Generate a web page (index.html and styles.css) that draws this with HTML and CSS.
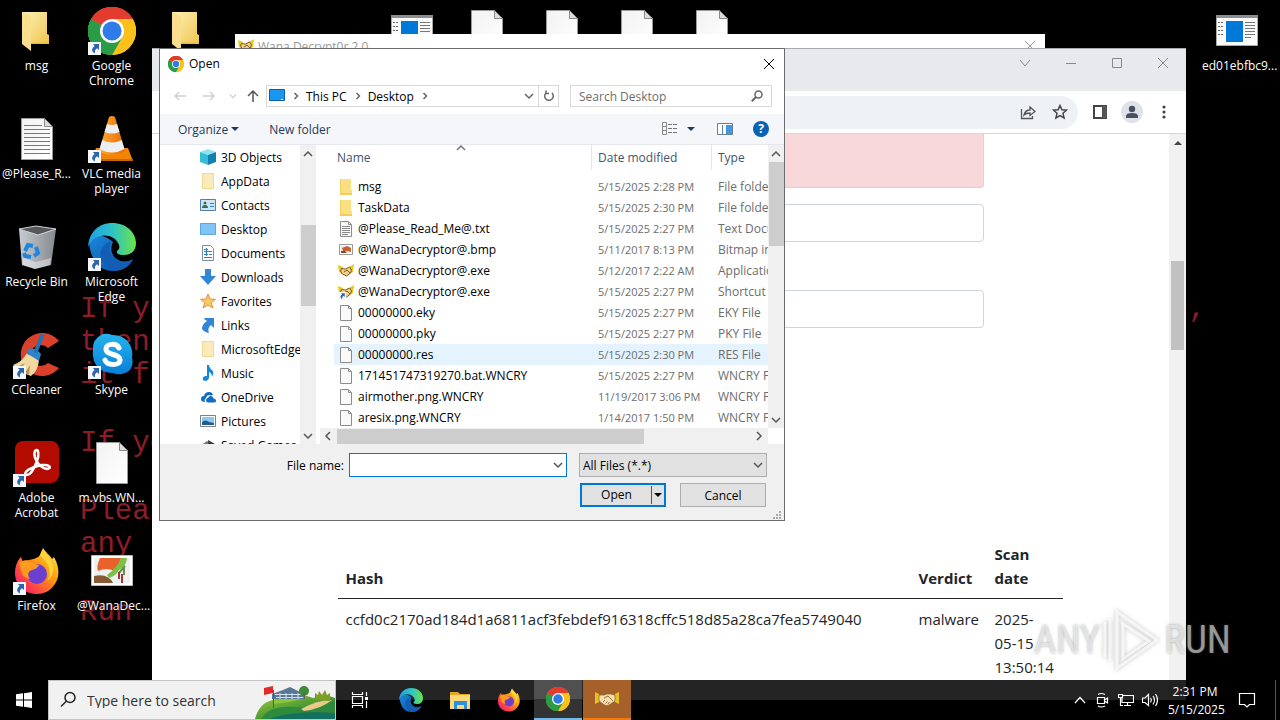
FILE: index.html
```html
<!DOCTYPE html>
<html lang="en">
<head>
  <meta charset="UTF-8">
  <meta name="viewport" content="width=device-width, initial-scale=1.0">
  <title>Desktop</title>
  <link rel="stylesheet" href="styles.css">
</head>
<body>
  <!-- shared icons -->
  <svg class="sprite" aria-hidden="true">
    <defs>
      <linearGradient id="g-folder" x1="0" y1="0" x2="1" y2="1"><stop offset="0" stop-color="#fff0b8"/><stop offset="1" stop-color="#efc64e"/></linearGradient>
      <linearGradient id="g-paper" x1="0" y1="0" x2="1" y2="1"><stop offset="0" stop-color="#f2f2f2"/><stop offset="1" stop-color="#fff"/></linearGradient>
      <linearGradient id="g-edge1" x1="0" y1="0" x2="1" y2="0"><stop offset="0" stop-color="#1f9fe0"/><stop offset=".5" stop-color="#2cc3c8"/><stop offset="1" stop-color="#6be34a"/></linearGradient>
      <linearGradient id="g-edge2" x1="0" y1="0" x2="1" y2="1"><stop offset="0" stop-color="#1b86dc"/><stop offset="1" stop-color="#0b4fa2"/></linearGradient>
      <linearGradient id="g-fox" x1="1" y1="0" x2="0" y2="1"><stop offset="0" stop-color="#fff14a"/><stop offset=".4" stop-color="#ff980e"/><stop offset=".75" stop-color="#ff3b4f"/><stop offset="1" stop-color="#e31587"/></linearGradient>
      <linearGradient id="g-skype" x1="0" y1="0" x2="0" y2="1"><stop offset="0" stop-color="#22b4ef"/><stop offset="1" stop-color="#0a7fd6"/></linearGradient>
      <linearGradient id="g-cone" x1="0" y1="0" x2="1" y2="0"><stop offset="0" stop-color="#ffae3a"/><stop offset="1" stop-color="#e86a00"/></linearGradient>
      <linearGradient id="g-bin" x1="0" y1="0" x2="1" y2="0"><stop offset="0" stop-color="#c8cbd0"/><stop offset="1" stop-color="#85898f"/></linearGradient>
      <linearGradient id="g-hill" x1="0" y1="0" x2="1" y2="1"><stop offset="0" stop-color="#a6cc3c"/><stop offset=".5" stop-color="#4f9e34"/><stop offset="1" stop-color="#0f5a4e"/></linearGradient>
    </defs>
    <symbol id="i-shortcut" viewBox="0 0 13 13"><path fill="#f5f7fa" d="M0 0h13v13H0z"/><path fill="#2b64ad" d="M5 2h6v6L9 6.200C7 7.500 6.600 9 7 11.500 3.500 10 3.200 6.500 6.700 4z"/></symbol>
    <symbol id="i-folder" viewBox="0 0 48 48"><path fill="url(#g-folder)" d="M9 5h25v22l2 1v9H16z"/><path fill="#f9df8d" d="M9 5l9 4v35l-9-7z"/><path fill="#e9bd45" d="M18 37h18v-1.500H18z"/></symbol>
    <symbol id="i-paper" viewBox="0 0 48 48"><path fill="url(#g-paper)" stroke="#9a9a9a" d="M8.500 3.500h23l8 8v33h-31z"/><path fill="#dcdcdc" stroke="#8a8a8a" d="M31.500 3.500v8h8z"/></symbol>
    <symbol id="i-text" viewBox="0 0 48 48"><use href="#i-paper"/><path stroke="#777" d="M11 10.500h18M11 14.500h26M11 18.500h26M11 22.500h26M11 26.500h26M11 30.500h26M11 34.500h26M11 38.500h26"/></symbol>
    <symbol id="i-chrome" viewBox="0 0 48 48"><circle cx="24" cy="24" r="24" fill="#fbc11a"/><path fill="#e33b2e" d="M24 24L3.200 12A24 24 0 0 1 44.800 12z"/><path fill="#2a9c48" d="M24 24L3.200 12A24 24 0 0 0 24 48l10.400-18z"/><path fill="#fbc11a" d="M24 12h20.800A24 24 0 0 1 24 48l10.400-18z"/><path fill="#e33b2e" d="M3.200 12A24 24 0 0 1 44.800 12H24a12 12 0 0 0-10.400 6z"/><path fill="#2a9c48" d="M3.200 12l10.400 18A12 12 0 0 0 34.400 30L24 48A24 24 0 0 1 3.200 12z"/><circle cx="24" cy="24" r="12" fill="#fff"/><circle cx="24" cy="24" r="9.500" fill="#2f7bea"/></symbol>
    <symbol id="i-vlc" viewBox="0 0 48 48"><path fill="#f38500" d="M8 33h32l5 13H3z"/><path fill="#c96500" d="M3 44h42v2H3z"/><path fill="url(#g-cone)" d="M21 2q3-2 6 0l10 34q-13 8-26 0z"/><path fill="#eceff2" d="M19 9q5 2 10 0l2.500 8q-7.500 3-15 0zM14.300 25q9.700 5 19.400 0l2.800 9q-12.500 7-25 0z"/></symbol>
    <symbol id="i-bin" viewBox="0 0 48 48"><path fill="url(#g-bin)" d="M6 6l18 5 19-5-5 36-16 4-13-4z"/><path fill="#55585c" stroke="#cfd2d6" d="M6 6l17-3 20 3-18 6z"/><path fill="#fff" opacity=".4" d="M10 35l13 4 15-4-1 7-15 4-12-4z"/><g fill="none" stroke="#1c86e0" stroke-width="4"><path d="M12 28l3-6 5 1M23 24l2 6-4 3M18 34l-6-1-1-3"/></g></symbol>
    <symbol id="i-edge" viewBox="0 0 48 48"><path fill="url(#g-edge2)" d="M1 20C3 36 10 48 25 48c9 0 16-4 20-12-6 4-12 3-16 0-6-4-7-10-4-17C14 9 3 12 1 20z"/><path fill="url(#g-edge1)" d="M0 24C1 8 12 0 24 0c15 0 24 10 24 20 0 8-5 12-12 12-6 0-8-2-7-4 3-2 3-5 1-8C25 10 6 9 0 24z"/><path fill="#125eb4" d="M19 20C7 28 13 46 27 48 36 47 42 43 45 36c-7 4-14 3-19-1-5-4-6-10-3-16z"/></symbol>
    <symbol id="i-ccleaner" viewBox="0 0 48 48"><path fill="#d9412c" d="M46 10A21.500 21.500 0 1 0 46 37L35 32A10.500 10.500 0 1 1 35 17z"/><path fill="#f2d9a0" d="M14 22l12 7q-1 11-8 16Q8 42 0 34q9-3 14-12z"/><path fill="#b99556" d="M4 36l8-4-5 7zM12 42l5-8-1 10z"/><path fill="#2d84c8" d="M15 18q7-2 13 5l-2 7q-7-5-12-7z"/><path stroke="#2472b2" stroke-width="4" stroke-linecap="round" d="M23 20l6-15"/></symbol>
    <symbol id="i-skype" viewBox="0 0 48 48"><path fill="url(#g-skype)" d="M15 3q5-1 9 1Q38 4 43 16q2 6 1 10 3 14-10 17-5 1-9-1Q11 42 6 30q-2-6-1-11Q4 8 15 3z"/><path fill="none" stroke="#fff" stroke-width="5" stroke-linecap="round" d="M31 17c-2-5-13-5-13 1 0 7 14 4 14 11 0 6-13 6-15 0"/></symbol>
    <symbol id="i-acrobat" viewBox="0 0 48 48"><rect x="2" y="2" width="44" height="42" rx="8" fill="#b30b00"/><path fill="none" stroke="#fff" stroke-width="2.600" d="M22 12c4-4 4 5 2 10-3 8-7 14-10 14-4 0-1-5 5-7 6-3 14-4 17-2 3 3-3 4-7 1-5-3-9-11-7-16z"/></symbol>
    <symbol id="i-firefox" viewBox="0 0 48 48"><path fill="url(#g-fox)" d="M30 1c3 5 7 7 9 11l2-2c4 7 6 16 3 23-4 9-11 14-20 14C11 47 2 38 2 26 2 20 4 14 8 10l2 5q3-2 6-2c5-1 9-2 11-5q1-3 3-7z"/><circle cx="24" cy="27" r="10" fill="#6b3fd0"/><path fill="#ff9a1c" d="M6 16q6-5 11-1 4 2 9 3-2 4-7 5c-4 1-5 5-2 9q-8-1-9-9z"/><path fill="#ffd43a" d="M27 8q4 4 8 10 4 9-1 16 7-5 6-15-3-9-10-17z"/></symbol>
    <symbol id="i-bmp" viewBox="0 0 48 48"><path fill="#fff" stroke="#bbb" d="M3.500 8.500h41v30h-41z"/><path fill="#eef1f3" d="M6 11h36v25H6z"/><path fill="#e8622a" d="M12 11h21q-2 8-7 13-7-4-16 0-2-4 2-13z"/><path fill="#7cc04a" d="M33 11h6q-1 9-8 12-3 6-10 8l-2-3q10-7 14-17z"/><path fill="#8a5a36" d="M6 29q14-3 19 7H6z"/><path stroke="#6a8b57" stroke-width="2" d="M31 26l6-7M36 20v8"/><path stroke="#a33" stroke-width="2" d="M34 27v9M31 25v7"/></symbol>
    <symbol id="i-sbmp" viewBox="0 0 16 16"><path fill="#fff" stroke="#999" d="M1.500 2.500h13v10h-13z"/><path fill="#e4e8ea" d="M3 4h10v7H3z"/><path fill="#c8622e" d="M4 6l5-2 4 2v4l-3-1H5z"/><path fill="#7a4a2a" d="M3 9h4l2 2H3z"/></symbol>
    <symbol id="i-exe" viewBox="0 0 48 48"><path fill="#fafafa" stroke="#aaa" d="M3.500 8.500h41v30h-41z"/><path fill="#8a8d92" d="M3 8h42v3H3z"/><path fill="#0078d7" d="M13 14h17v21H13z"/><path stroke="#666" stroke-dasharray="2 1" d="M5 15.500h6M5 19.500h6M5 23.500h6M5 27.500h6"/><path stroke="#777" d="M32 15.500h10M32 18.500h10M32 21.500h10M32 24.500h10M32 27.500h10M32 30.500h6"/></symbol>
    <symbol id="i-hands" viewBox="0 0 24 18"><path fill="#e8c020" d="M0 2l4 2v8l-4 2zM24 2l-4 2v8l4 2z"/><path fill="#f4dfb4" stroke="#8e6428" stroke-width=".8" d="M4 5l5 0 3-1 4 0 4 1v6l-6 4q-3 2-6-1l-4-3z"/><path stroke="#8e6428" stroke-width=".9" fill="none" d="M9 8l4-2 5 5M8 12l2-2M10.500 13.500l2-2M13 14l1.500-2"/></symbol>
    <symbol id="i-shands" viewBox="0 0 16 16"><path fill="#e8c81c" d="M0 2l5 2v7L1 9zM16 1l-5 3v7l4-2z"/><path fill="#eed08a" stroke="#7d5a1e" d="M3.500 5.500l4 .5 4-2 2 3-1 3-4 3-4-2-2-3z"/><path fill="none" stroke="#7d5a1e" d="M6 9l3-2 3 3"/></symbol>
    <symbol id="i-file" viewBox="0 0 16 16"><path fill="#fafafa" stroke="#8c8c8c" d="M2.500.5h8l3 3v12h-11z"/><path fill="none" stroke="#8c8c8c" d="M10.500.5v3h3"/></symbol>
    <symbol id="i-txt" viewBox="0 0 16 16"><use href="#i-file"/><path stroke="#888" d="M4 5.500h8M4 7.500h8M4 9.500h8M4 11.500h8M4 13.500h6"/></symbol>
    <symbol id="i-sfolder" viewBox="0 0 16 16"><path fill="#fbdf83" d="M2 0h11v11h1v5H2z"/><path fill="#f3cd5c" d="M3 14h11v2H2V0h1z"/></symbol>
    <symbol id="i-pfolder" viewBox="0 0 16 16"><path fill="#fbeaba" stroke="#f0d890" d="M2.500.5h11v15h-11z"/></symbol>
    <symbol id="i-chev-r" viewBox="0 0 8 8"><path fill="none" stroke="#666" stroke-width="1.500" d="M2.500 1L5.500 4 2.500 7"/></symbol>
    <symbol id="i-chev-d" viewBox="0 0 10 10"><path fill="none" stroke="currentColor" stroke-width="1.500" d="M1 3l4 4 4-4"/></symbol>
    <symbol id="i-chev-u" viewBox="0 0 10 10"><path fill="none" stroke="currentColor" stroke-width="1.500" d="M1 7l4-4 4 4"/></symbol>
    <symbol id="i-chev-l" viewBox="0 0 10 10"><path fill="none" stroke="currentColor" stroke-width="1.500" d="M7 1L3 5l4 4"/></symbol>
    <symbol id="i-chev-rr" viewBox="0 0 10 10"><path fill="none" stroke="currentColor" stroke-width="1.500" d="M3 1l4 4-4 4"/></symbol>
    <symbol id="i-tri" viewBox="0 0 8 4"><path fill="currentColor" d="M0 0h8L4 4z"/></symbol>
    <symbol id="i-x" viewBox="0 0 12 12"><path stroke="currentColor" d="M1 1l10 10M11 1L1 11"/></symbol>
  </svg>

  <main class="desktop">
    <div class="wallpaper">
      <p>If yo<span class="wallpaper-end">,</span></p>
      <p>then</p>
      <p>it fr</p>
      <p class="gap">If yo</p>
      <p class="gap">Pleas</p>
      <p>any</p>
      <p class="gap">Run</p>
    </div>

    <div class="icons">
      <div class="shortcut"><svg class="big"><use href="#i-folder"/></svg>msg</div>
      <div class="shortcut"><svg class="big"><use href="#i-text"/></svg>@Please_R...</div>
      <div class="shortcut"><svg class="big"><use href="#i-bin"/></svg>Recycle Bin</div>
      <div class="shortcut"><svg class="big"><use href="#i-ccleaner"/></svg><svg class="arrow"><use href="#i-shortcut"/></svg>CCleaner</div>
      <div class="shortcut"><svg class="big"><use href="#i-acrobat"/></svg><svg class="arrow"><use href="#i-shortcut"/></svg>Adobe Acrobat</div>
      <div class="shortcut"><svg class="big"><use href="#i-firefox"/></svg><svg class="arrow"><use href="#i-shortcut"/></svg>Firefox</div>
      <div class="shortcut"><svg class="big"><use href="#i-chrome"/></svg><svg class="arrow"><use href="#i-shortcut"/></svg>Google Chrome</div>
      <div class="shortcut"><svg class="big"><use href="#i-vlc"/></svg><svg class="arrow"><use href="#i-shortcut"/></svg>VLC media player</div>
      <div class="shortcut"><svg class="big"><use href="#i-edge"/></svg><svg class="arrow"><use href="#i-shortcut"/></svg>Microsoft Edge</div>
      <div class="shortcut"><svg class="big"><use href="#i-skype"/></svg><svg class="arrow"><use href="#i-shortcut"/></svg>Skype</div>
      <div class="shortcut"><svg class="big"><use href="#i-paper"/></svg>m.vbs.WN...</div>
      <div class="shortcut"><svg class="big"><use href="#i-bmp"/></svg>@WanaDec...</div>
      <div class="shortcut col-3"><svg class="big"><use href="#i-folder"/></svg></div>
      <div class="shortcut col-6"><svg class="big"><use href="#i-exe"/></svg></div>
      <div class="shortcut col-7"><svg class="big"><use href="#i-paper"/></svg></div>
      <div class="shortcut col-8"><svg class="big"><use href="#i-paper"/></svg></div>
      <div class="shortcut col-9"><svg class="big"><use href="#i-paper"/></svg></div>
      <div class="shortcut col-10"><svg class="big"><use href="#i-paper"/></svg></div>
      <div class="shortcut col-17"><svg class="big"><use href="#i-exe"/></svg>ed01ebfbc9...</div>
    </div>

    <section class="window wana">
      <svg class="s16"><use href="#i-shands"/></svg>
      <span class="wana-title">Wana Decrypt0r 2.0</span>
      <button class="plain" aria-label="Close Wana"><svg class="s12"><use href="#i-x"/></svg></button>
    </section>

    <section class="window browser">
      <div class="tabstrip">
        <button class="plain" aria-label="Search tabs"><svg class="s12" viewBox="0 0 12 12"><path d="M1 3l5 6 5-6"/></svg></button>
        <button class="plain" aria-label="Minimize"><svg class="s12" viewBox="0 0 12 12"><path d="M1 6.500h10"/></svg></button>
        <button class="plain" aria-label="Maximize"><svg class="s12" viewBox="0 0 12 12"><path d="M1.500 1.500h9v9h-9z"/></svg></button>
        <button class="plain" aria-label="Close browser"><svg class="s12" viewBox="0 0 12 12"><path d="M1 1l10 10M11 1L1 11"/></svg></button>
      </div>
      <div class="toolbar">
        <div class="omnibox">
          <button class="plain" aria-label="Share"><svg class="s16" viewBox="0 0 16 16" fill="none" stroke="#555" stroke-width="1.300"><path d="M1.500 5v9.500h11V12M4 11c1-4 3-5 6-5V3l5 4.500-5 4V9c-3 0-4.500.5-6 2z"/></svg></button>
          <button class="plain" aria-label="Bookmark"><svg class="s16" viewBox="0 0 16 16" fill="none" stroke="#444" stroke-width="1.500"><path d="M8 1.500l1.900 4.300 4.600.4-3.500 3.100 1.100 4.600L8 11.500l-4.100 2.400L5 9.300 1.500 6.200l4.600-.4z"/></svg></button>
        </div>
        <button class="plain panel" aria-label="Side panel"><svg class="s16" viewBox="0 0 16 16"><path fill="none" stroke="#444" stroke-width="2" d="M2 2h12v12H2z"/><path fill="#555" d="M10 2h5v12h-5z"/></svg></button>
        <button class="plain avatar" aria-label="Profile"><svg class="s16" viewBox="0 0 16 16" fill="#4a5064"><circle cx="8" cy="5" r="3.200"/><path d="M2 14v-2q0-3 6-3t6 3v2z"/></svg></button>
        <button class="plain" aria-label="Menu"><svg class="s16" viewBox="0 0 16 16" fill="#444"><circle cx="8" cy="3" r="1.600"/><circle cx="8" cy="8" r="1.600"/><circle cx="8" cy="13" r="1.600"/></svg></button>
      </div>
      <div class="viewport">
        <div class="page">
          <div class="container">
            <div class="alert"></div>
            <input class="field" type="text" aria-label="Hash">
            <input class="field second" type="text" aria-label="File">
            <table class="scans">
              <thead>
                <tr><th class="hash">Hash</th><th class="verdict">Verdict</th><th>Scan date</th></tr>
              </thead>
              <tbody>
                <tr><td>ccfd0c2170ad184d1a6811acf3febdef916318cffc518d85a28ca7fea5749040</td><td>malware</td><td>2025-<wbr>05-15 13:50:14</td></tr>
              </tbody>
            </table>
          </div>
        </div>
        <div class="page-scroll">
          <svg class="tri-up"><use href="#i-tri"/></svg>
          <div class="page-thumb"></div>
        </div>
      </div>
    </section>

    <section class="window dialog">
      <header class="dialog-title">
        <svg class="s16"><use href="#i-chrome"/></svg>
        <span>Open</span>
        <button class="plain" aria-label="Close"><svg class="s12"><use href="#i-x"/></svg></button>
      </header>
      <nav class="dialog-nav">
        <button class="plain step" aria-label="Back"><svg class="s16" viewBox="0 0 16 16"><path d="M14 8H3M7 4L3 8l4 4"/></svg></button>
        <button class="plain step" aria-label="Forward"><svg class="s16" viewBox="0 0 16 16"><path d="M2 8h11M9 4l4 4-4 4"/></svg></button>
        <button class="plain recent" aria-label="Recent"><svg class="s8"><use href="#i-chev-d"/></svg></button>
        <button class="plain up" aria-label="Up"><svg class="s16" viewBox="0 0 16 16"><path d="M8 14V3M3 8l5-5 5 5"/></svg></button>
        <div class="address">
          <svg class="monitor" viewBox="0 0 16 14"><path fill="#1a96f0" stroke="#0b5fae" d="M.5.5h15v11H.5z"/><path stroke="#fff" d="M2 13h2M12 10.500h2"/></svg>
          <svg class="s8"><use href="#i-chev-r"/></svg>
          <a href="#pc">This PC</a>
          <svg class="s8"><use href="#i-chev-r"/></svg>
          <a href="#desktop">Desktop</a>
          <svg class="s8"><use href="#i-chev-r"/></svg>
          <button class="plain drop" aria-label="Locations"><svg class="s10"><use href="#i-chev-d"/></svg></button>
          <button class="plain refresh" aria-label="Refresh"><svg class="s12" viewBox="0 0 12 12"><path fill="none" stroke="#666" stroke-width="1.500" d="M3.500 2.500A4.300 4.300 0 1 0 9 3M3 .5v3h3"/></svg></button>
        </div>
        <div class="search">
          <input type="text" placeholder="Search Desktop" aria-label="Search Desktop">
          <svg class="s12" viewBox="0 0 12 12"><circle cx="7.500" cy="4.500" r="3.500" fill="none" stroke="#666" stroke-width="1.500"/><path stroke="#666" stroke-width="2" d="M5 7L.8 11.200"/></svg>
        </div>
      </nav>
      <div class="commands">
        <button class="plain organize">Organize <svg class="tri"><use href="#i-tri"/></svg></button>
        <button class="plain">New folder</button>
        <button class="plain views" aria-label="Views"><svg class="s16" viewBox="0 0 16 14"><path fill="none" stroke="#8a8a8a" d="M.5.5h4v12h-4zM.5 4.500h4M.5 8.500h4"/><path stroke="#777" stroke-dasharray="4 1" d="M6 2.500h10M6 6.500h10M6 10.500h10"/></svg><svg class="tri"><use href="#i-tri"/></svg></button>
        <button class="plain preview" aria-label="Preview pane"><svg class="s16" viewBox="0 0 16 14"><path fill="#fff" stroke="#6b7f96" d="M.5 1.500h15v11H.5z"/><path fill="#3f98e4" d="M9 3h6v9H9z"/><path stroke="#6b7f96" d="M5.500 3v9"/></svg></button>
        <button class="help" aria-label="Help">?</button>
      </div>
      <div class="dialog-body">
        <ul class="tree">
          <li><svg class="s16" viewBox="0 0 16 16"><path fill="#8fe3f2" d="M0 3l8-3 8 3-8 3z"/><path fill="#35bdd8" d="M0 3l8 3v10l-8-3z"/><path fill="#147fae" d="M16 3L8 6v10l8-3z"/></svg>3D Objects</li>
          <li><svg class="s16"><use href="#i-pfolder"/></svg>AppData</li>
          <li><svg class="s16" viewBox="0 0 16 16"><path fill="#cfe6f7" stroke="#517fa5" d="M.5 2.500h15v11H.5z"/><circle cx="5" cy="6" r="1.500" fill="#3e6e52"/><path fill="#3e6e52" d="M2 11q0-3 3-3t3 3z"/><path stroke="#2a84c8" d="M10 6.500h4M10 9.500h4"/></svg>Contacts</li>
          <li><svg class="s16" viewBox="0 0 16 16"><path fill="#80c4f6" stroke="#5ba6dd" d="M.5 2.500h15v11H.5z"/></svg>Desktop</li>
          <li><svg class="s16" viewBox="0 0 16 16"><path fill="#fff" stroke="#7b8ea0" d="M2.500.5h8l3 3v12h-11z"/><path stroke="#2a84c8" d="M4 4.500h4M4 6.500h8M4 9.500h4M9 9.500h3M4 12.500h8M6.500 3v8"/></svg>Documents</li>
          <li><svg class="s16" viewBox="0 0 16 16"><path fill="#2f87d6" d="M5 0h6v7h5l-8 9-8-9h5z"/></svg>Downloads</li>
          <li><svg class="s16" viewBox="0 0 16 16"><path fill="#fbcb62" stroke="#dd9440" d="M8 1l2 5 5.500.3-4.300 3.500L13 15 8 12l-5 3 1.800-5.200L.5 6.300 6 6z"/></svg>Favorites</li>
          <li><svg class="s16" viewBox="0 0 16 16"><path fill="#2f87d6" d="M5 1h9v10l-3-3q-4 3-2 8-5-1-7-4 0-5 5-8L4 2z"/></svg>Links</li>
          <li><svg class="s16"><use href="#i-pfolder"/></svg>MicrosoftEdge</li>
          <li><svg class="s16" viewBox="0 0 16 16"><path fill="#1488e0" d="M7 0h2q0 3 4 6 1 3-1 6 0-4-3-5v6q-1 3-4 3-3-1-2-3.500Q4 10.500 7 11z"/></svg>Music</li>
          <li><svg class="s16" viewBox="0 0 16 16"><path fill="#0f6cc4" d="M1 10q0-3 3-3 1-4 5-4 3 0 4 3l-2 .5Q7 5 6 9q-2 1-1 4Q1 13 1 10z"/><path fill="#0f6cc4" d="M6 11q0-2 2-2 1-2.500 3-2 2 0 2.500 2.500Q16 9.500 16 12q0 1.500-2 1.500H8Q6 13.500 6 11z"/></svg>OneDrive</li>
          <li><svg class="s16" viewBox="0 0 16 16"><path fill="#fff" stroke="#77818c" d="M.5 2.500h15v11H.5z"/><path fill="#8cc7f2" d="M2 4h12v8H2z"/><path fill="#245a86" d="M2 9q4-3 7 0l5 1v2H2z"/></svg>Pictures</li>
          <li><svg class="s16" viewBox="0 0 16 16"><path fill="#777" d="M0 9l7-5 3 3v7H0z"/><path fill="#333" d="M8 3l7 4v8H9z"/></svg>Saved Games</li>
        </ul>
        <div class="vscroll tree-scroll">
          <svg class="s10"><use href="#i-chev-u"/></svg>
          <div class="thumb"></div>
          <svg class="s10"><use href="#i-chev-d"/></svg>
        </div>
        <div class="files">
          <svg class="sort"><use href="#i-chev-u"/></svg>
          <div class="list">
            <table class="listing">
              <colgroup><col class="c-name"><col class="c-date"><col class="c-type"></colgroup>
              <thead><tr><th>Name</th><th>Date modified</th><th>Type</th></tr></thead>
              <tbody>
                <tr><td><svg class="s16"><use href="#i-sfolder"/></svg>msg</td><td>5/15/2025 2:28 PM</td><td>File folder</td></tr>
                <tr><td><svg class="s16"><use href="#i-sfolder"/></svg>TaskData</td><td>5/15/2025 2:30 PM</td><td>File folder</td></tr>
                <tr><td><svg class="s16"><use href="#i-txt"/></svg>@Please_Read_Me@.txt</td><td>5/15/2025 2:27 PM</td><td>Text Document</td></tr>
                <tr><td><svg class="s16"><use href="#i-sbmp"/></svg>@WanaDecryptor@.bmp</td><td>5/11/2017 8:13 PM</td><td>Bitmap image</td></tr>
                <tr><td><svg class="s16"><use href="#i-shands"/></svg>@WanaDecryptor@.exe</td><td>5/12/2017 2:22 AM</td><td>Application</td></tr>
                <tr><td><svg class="s16"><use href="#i-shands"/><use href="#i-shortcut" y="8" width="8" height="8"/></svg>@WanaDecryptor@.exe</td><td>5/15/2025 2:27 PM</td><td>Shortcut</td></tr>
                <tr><td><svg class="s16"><use href="#i-file"/></svg>00000000.eky</td><td>5/15/2025 2:27 PM</td><td>EKY File</td></tr>
                <tr><td><svg class="s16"><use href="#i-file"/></svg>00000000.pky</td><td>5/15/2025 2:27 PM</td><td>PKY File</td></tr>
                <tr class="hover"><td><svg class="s16"><use href="#i-file"/></svg>00000000.res</td><td>5/15/2025 2:30 PM</td><td>RES File</td></tr>
                <tr><td><svg class="s16"><use href="#i-file"/></svg>171451747319270.bat.WNCRY</td><td>5/15/2025 2:27 PM</td><td>WNCRY File</td></tr>
                <tr><td><svg class="s16"><use href="#i-file"/></svg>airmother.png.WNCRY</td><td>11/19/2017 3:06 PM</td><td>WNCRY File</td></tr>
                <tr><td><svg class="s16"><use href="#i-file"/></svg>aresix.png.WNCRY</td><td>1/14/2017 1:50 PM</td><td>WNCRY File</td></tr>
              </tbody>
            </table>
          </div>
          <div class="vscroll list-scroll">
            <svg class="s10"><use href="#i-chev-u"/></svg>
            <div class="thumb"></div>
            <svg class="s10"><use href="#i-chev-d"/></svg>
          </div>
          <div class="hscroll">
            <svg class="s10"><use href="#i-chev-l"/></svg>
            <div class="thumb"></div>
            <svg class="s10"><use href="#i-chev-rr"/></svg>
          </div>
        </div>
      </div>
      <footer class="dialog-foot">
        <div class="foot-row">
          <label for="file-name">File name:</label>
          <div class="combo name"><input id="file-name" type="text"><svg class="s10"><use href="#i-chev-d"/></svg></div>
          <div class="combo type"><select aria-label="File type"><option>All Files (*.*)</option></select><svg class="s10"><use href="#i-chev-d"/></svg></div>
        </div>
        <div class="foot-row actions">
          <button class="btn open"><span>Open</span><svg class="tri"><use href="#i-tri"/></svg></button>
          <button class="btn">Cancel</button>
        </div>
        <svg class="grip" viewBox="0 0 9 9" fill="#a8a8a8"><path d="M7 1h2v2H7zM4 4h2v2H4zM7 4h2v2H7zM1 7h2v2H1zM4 7h2v2H4zM7 7h2v2H7z"/></svg>
      </footer>
    </section>

    <div class="watermark">
      <span>ANY</span>
      <svg viewBox="0 0 60 64"><path d="M15 4v56l40-28zM21 16l26 17-26 18zM8 11v42M3 14v35"/></svg>
      <span>RUN</span>
    </div>

    <footer class="taskbar">
      <button class="plain start" aria-label="Start"><svg class="s16" viewBox="0 0 16 16"><path fill="#fff" d="M0 2.300L7 1.300v6.200H0zM8 1.200L16 0v7.500H8zM0 8.500h7v6.200l-7-1zM8 8.500h8V16l-8-1.200z"/></svg></button>
      <div class="taskbar-search">
        <svg class="s18" viewBox="0 0 18 18"><circle cx="11" cy="6.500" r="5" fill="none" stroke="#222" stroke-width="1.500"/><path stroke="#222" stroke-width="1.500" d="M7.500 10L2 15.500"/></svg>
        <input type="text" placeholder="Type here to search" aria-label="Type here to search">
        <svg class="scene" viewBox="0 0 80 38"><path fill="url(#g-hill)" d="M0 38Q4 22 18 19q24-9 40-2 14-4 22 0v21z"/><path fill="#2f8a3c" d="M6 38q8-14 34-12 22 2 40-6v18z"/><path fill="#137060" d="M14 38q24-9 66-6v6z"/><path fill="#8cc63e" d="M18 20q18-6 34-3-16 4-34 6z"/><path fill="#e8c98a" d="M46 28q16-9 31-9-11 9-28 11z"/><path fill="#5b7796" d="M17 18v-5l11-4 7-3 6 3 9 4v5z"/><path stroke="#cfe0ec" d="M20 13.500h28M21 16.500h28M25 12v6M31 12v6M37 12v6M43 12v6"/><circle cx="49" cy="10" r="5" fill="#3f8a3a"/><path stroke="#7b5030" d="M49 12v6M18.500 9v18"/><path fill="#e02a2a" d="M9 7l9-2v7l-9 2z"/><path fill="#7e9e28" d="M60 19v-7l3 2 1-4 3 4 3-5 2 5 3-2v8z"/></svg>
      </div>
      <button class="plain task" aria-label="Task view"><svg class="s18" viewBox="0 0 18 18" fill="none" stroke="#fff" stroke-width="1.200"><path d="M1.500 5.500h10v7h-10zM1.500 1v2.500h10V1M1.500 17v-2.500h10V17M15.500 1v4M15.500 10v7"/><path fill="#fff" stroke="none" d="M14 6h3v3h-3z"/></svg></button>
      <div class="pinned">
        <button class="plain task" aria-label="Edge"><svg class="s24"><use href="#i-edge"/></svg></button>
        <button class="plain task" aria-label="File Explorer"><svg class="s24" viewBox="0 0 24 24"><path fill="#e5a823" d="M2 4h8l2 2h10v3H2z"/><path fill="#fbd978" d="M2 7h20v14H2z"/><path fill="#2d8fdd" d="M6 13h13v8h-3v-4H9v4H6z"/></svg></button>
        <button class="plain task" aria-label="Firefox"><svg class="s24"><use href="#i-firefox"/></svg></button>
        <button class="plain task active" aria-label="Chrome"><svg class="s24"><use href="#i-chrome"/></svg></button>
        <button class="plain task alerting" aria-label="Wana Decrypt0r"><svg class="s24"><use href="#i-hands"/></svg></button>
      </div>
      <div class="tray">
        <svg class="s12" viewBox="0 0 12 12"><path d="M1 9l5-5.500L11 9"/></svg>
        <svg class="s16" viewBox="0 0 16 16"><path d="M3.500 5.500h7v6h-7zM10.500 8l3-2v5l-3-2M4 2.500q3-2 7 0M4 14q3 2 7 0"/></svg>
        <svg class="s16" viewBox="0 0 16 16"><path d="M5 3.500h10.500v7H4V6M9.500 10.500v3M6 13.500h7M.5 2.500h4v3h-4zM2.500 5.500v8H5"/></svg>
        <svg class="s16" viewBox="0 0 16 16"><path d="M.5 6v4.500h2.500l3.500 3v-11L3 6zM8.500 6q1.500 2 0 4.500M11 4q3 4 0 8.500M13.500 2q4 6 0 12"/></svg>
        <div class="clock"><time>2:31 PM</time><time>5/15/2025</time></div>
        <svg class="s18 note" viewBox="0 0 18 18"><path d="M1.500 2.500h15v11h-5L9 16l-2.500-2.500h-5z"/></svg>
        <div class="peek"></div>
      </div>
    </footer>
  </main>
</body>
</html>
```
FILE: styles.css
```css
* {
  box-sizing: border-box;
}
body {
  margin: 0;
  font-family: "Open Sans", "Noto Sans", sans-serif;
  font-size: 12px;
  line-height: 15px;
  background-color: #000;
  color: #000;
}
svg {
  display: block;
  flex: none;
}
.sprite {
  position: absolute;
  width: 0;
  height: 0;
}
.s8 { width: 8px; height: 8px; }
.s10 { width: 10px; height: 10px; }
.s12 { width: 12px; height: 12px; }
.s16 { width: 16px; height: 16px; }
.s18 { width: 18px; height: 18px; }
.s24 { width: 24px; height: 24px; }
.tri { width: 8px; height: 4px; }
.plain {
  display: flex;
  align-items: center;
  justify-content: center;
  padding: 0;
  border: 0;
  background: none;
  font: inherit;
  color: inherit;
}
.desktop {
  position: relative;
  height: 100vh;
  overflow: hidden;
}
.window {
  position: absolute;
  background: #fff;
}

/* wallpaper and desktop icons */
.wallpaper {
  position: absolute;
  top: 293px;
  left: 80px;
  right: 74px;
  font-family: "Liberation Mono", monospace;
  font-size: 29px;
  line-height: 33px;
  color: #8f1c28;
}
.wallpaper p {
  display: flex;
  justify-content: space-between;
  margin: 0;
}
.wallpaper .gap {
  margin-top: 35px;
}
.icons {
  position: absolute;
  top: 0;
  left: -1px;
  display: grid;
  grid-template-columns: repeat(17, 75px);
  grid-template-rows: repeat(6, 108px);
  grid-auto-flow: column;
}
.shortcut {
  position: relative;
  padding: 7px 3px 0;
  color: #fff;
  text-align: center;
  text-shadow: 0 1px 2px #000;
}
.big {
  width: 48px;
  height: 48px;
  margin: 0 auto 3px;
}
.arrow {
  position: absolute;
  top: 42px;
  left: 14px;
  width: 13px;
  height: 13px;
}
.col-3 { grid-area: 1 / 3; }
.col-6 { grid-area: 1 / 6; }
.col-7 { grid-area: 1 / 7; }
.col-8 { grid-area: 1 / 8; }
.col-9 { grid-area: 1 / 9; }
.col-10 { grid-area: 1 / 10; }
.col-17 { grid-area: 1 / 17; }

/* window at the back */
.wana {
  top: 34px;
  left: 235px;
  right: 235px;
  display: flex;
  align-items: center;
  gap: 4px;
  height: 60px;
  padding: 0 9px 36px 3px;
  color: #999;
}
.wana .plain {
  margin-left: auto;
}

/* browser */
.browser {
  top: 48px;
  right: 94px;
  bottom: 20px;
  left: 152px;
  display: flex;
  flex-direction: column;
  border-top: 1px solid #a5a8ad;
}
.tabstrip {
  display: flex;
  justify-content: flex-end;
  height: 42px;
  padding-bottom: 14px;
  background: #e7e9ed;
}
.tabstrip .plain {
  width: 46px;
}
.tabstrip svg {
  fill: none;
  stroke: #85888d;
}
.toolbar {
  display: flex;
  align-items: center;
  height: 43px;
  padding-right: 14px;
  border-bottom: 1px solid #d5d7da;
}
.omnibox {
  display: flex;
  flex: 1;
  align-items: center;
  justify-content: flex-end;
  gap: 16px;
  height: 33px;
  margin-left: 120px;
  padding-right: 10px;
  border-radius: 17px;
  background: #eff2f5;
}
.panel {
  margin-left: 14px;
}
.avatar {
  width: 22px;
  height: 22px;
  margin: 0 13px;
  border-radius: 50%;
  background: #dfe2e8;
}
.viewport {
  display: flex;
  flex: 1;
  min-height: 0;
}
.page {
  flex: 1;
  overflow: hidden;
  font-size: 15px;
  line-height: 24px;
  color: #212529;
}
.container {
  width: 646px;
  margin: 0 auto;
}
.alert {
  height: 54px;
  margin-bottom: 16px;
  border: 1px solid #f5c6cb;
  border-top: 0;
  border-radius: 0 0 4px 4px;
  background: #f8d7da;
}
.field {
  display: block;
  width: 100%;
  height: 38px;
  border: 1px solid #ced4da;
  border-radius: 4px;
}
.second {
  margin-top: 48px;
}
.scans {
  width: 725px;
  margin-top: 206px;
  border-collapse: collapse;
  table-layout: fixed;
}
.scans th,
.scans td {
  padding: 8px;
  text-align: left;
  vertical-align: top;
}
.scans th {
  vertical-align: bottom;
  border-bottom: 1px solid #212529;
}
.scans .hash { width: 573px; }
.scans .verdict { width: 76px; }
.page-scroll {
  width: 17px;
  padding: 7px 2px 0;
  background: #f1f1f1;
}
.tri-up {
  width: 8px;
  height: 4px;
  margin: 0 auto;
  color: #444;
  transform: rotate(180deg);
}
.page-thumb {
  height: 89px;
  margin-top: 116px;
  background: #c1c1c1;
}

/* file dialog */
.dialog {
  top: 48px;
  left: 159px;
  width: 626px;
  border: 1px solid #6b6b6b;
}
.dialog-title {
  display: flex;
  align-items: center;
  gap: 5px;
  height: 29px;
  padding: 0 9px 0 8px;
}
.dialog-title .plain {
  margin-left: auto;
}
.dialog-nav {
  display: flex;
  align-items: center;
  height: 36px;
  padding: 0 12px 0 5px;
}
.dialog-nav > .plain svg {
  fill: none;
  stroke: #d0d0d0;
  stroke-width: 1.5;
}
.step { width: 29px; }
.recent { width: 20px; color: #ccc; }
.up { width: 20px; }
.dialog-nav > .up svg { stroke: #555; }
.address {
  display: flex;
  flex: 1;
  align-items: center;
  gap: 7px;
  height: 22px;
  margin: 0 11px 0 3px;
  padding-left: 2px;
  border: 1px solid #d9d9d9;
}
.address a {
  color: inherit;
  text-decoration: none;
}
.address .s8 {
  margin-right: -1px;
}
.monitor {
  width: 16px;
  height: 14px;
}
.address .drop {
  margin-left: auto;
  color: #666;
}
.address .refresh {
  width: 20px;
  height: 20px;
  margin-left: -3px;
  border-left: 1px solid #d9d9d9;
}
.search {
  display: flex;
  align-items: center;
  width: 202px;
  height: 22px;
  padding: 0 8px;
  border: 1px solid #d9d9d9;
}
.search input,
.taskbar-search input {
  flex: 1;
  min-width: 0;
  padding: 0;
  border: 0;
  outline: 0;
  background: none;
  font: inherit;
}
.search input::placeholder {
  color: #6d6d6d;
}
.commands {
  display: flex;
  align-items: center;
  height: 31px;
  padding: 0 15px 0 18px;
  border-bottom: 1px solid #e4e8ee;
  background: #f4f6fa;
  color: #1e395b;
}
.organize {
  gap: 3px;
  margin-right: 30px;
}
.views {
  gap: 9px;
  margin-left: auto;
}
.preview {
  margin: 0 20px 0 22px;
}
.help {
  width: 16px;
  height: 16px;
  padding: 0;
  border: 0;
  border-radius: 50%;
  background: #0a62b4;
  color: #fff;
  font: bold 12px/16px "Open Sans", sans-serif;
}
.dialog-body {
  display: flex;
  height: 299px;
  overflow: hidden;
}
.tree {
  width: 140px;
  margin: 0;
  padding: 0 0 0 40px;
  list-style: none;
  white-space: nowrap;
  overflow: hidden;
}
.tree li {
  display: flex;
  align-items: center;
  gap: 5px;
  height: 24px;
}
.vscroll,
.hscroll {
  display: flex;
  align-items: center;
  background: #f0f0f0;
  color: #555;
}
.vscroll {
  flex-direction: column;
  width: 16px;
  padding: 4px 0 3px;
}
.vscroll .thumb {
  width: 15px;
  background: #cdcdcd;
}
.vscroll svg:last-child,
.hscroll svg:last-child {
  margin-top: auto;
}
.tree-scroll .thumb {
  height: 81px;
  margin-top: 66px;
}
.files {
  position: relative;
  display: grid;
  flex: 1;
  min-width: 0;
  grid-template-columns: 1fr 16px;
  grid-template-rows: 283px 16px;
  margin-left: 4px;
}
.sort {
  position: absolute;
  top: -2px;
  left: 136px;
  width: 10px;
  height: 10px;
  color: #777;
}
.list {
  min-width: 0;
  margin-left: 14px;
  overflow: hidden;
}
.listing {
  width: 458px;
  border-collapse: separate;
  border-spacing: 0;
  table-layout: fixed;
  white-space: nowrap;
}
.c-name { width: 258px; }
.c-date { width: 120px; }
.c-type { width: 80px; }
.listing th {
  height: 25px;
  padding: 0 0 0 6px;
  border-right: 1px solid #e5e5e5;
  font-weight: normal;
  text-align: left;
  color: #43536f;
}
.listing th:first-child {
  padding-left: 3px;
}
.listing tbody::before {
  content: "";
  display: block;
  height: 6px;
}
.listing td {
  height: 21px;
  padding: 0 0 0 6px;
  color: #6d6d6d;
}
.listing td:nth-child(2) {
  font-size: 11px;
}
.listing td:first-child {
  display: flex;
  align-items: center;
  gap: 4px;
  padding-left: 4px;
  color: #000;
}
.listing .hover td {
  background: #e5f3ff;
}
.list-scroll .thumb {
  height: 84px;
  margin-top: 3px;
}
.hscroll {
  padding: 0 4px 0 3px;
}
.hscroll .thumb {
  width: 307px;
  height: 15px;
  margin-left: 4px;
  background: #cdcdcd;
}
.hscroll svg:last-child {
  margin: 0 0 0 auto;
}
.dialog-foot {
  position: relative;
  display: flex;
  flex-direction: column;
  gap: 6px;
  height: 76px;
  padding: 9px 17px 0 0;
  background: #f0f0f0;
}
.foot-row {
  display: flex;
  align-items: center;
  justify-content: flex-end;
}
.combo {
  position: relative;
  color: #555;
}
.combo svg {
  position: absolute;
  top: 7px;
  right: 4px;
}
.combo input,
.combo select {
  display: block;
  width: 100%;
  height: 24px;
  padding: 0 4px;
  border: 1px solid #0078d7;
  background: #fff;
  font: inherit;
}
.combo select {
  appearance: none;
  padding: 0 3px;
  border-color: #adadad;
  background: #e1e1e1;
  color: #000;
}
.name {
  width: 218px;
  margin: 0 12px 0 5px;
}
.type {
  width: 188px;
}
.actions {
  gap: 14px;
  padding-right: 1px;
}
.btn {
  display: flex;
  align-items: center;
  justify-content: center;
  width: 86px;
  height: 24px;
  padding: 0;
  border: 1px solid #adadad;
  background: #e1e1e1;
  font: inherit;
}
.open {
  border: 2px solid #0078d7;
}
.open span {
  flex: 1;
  border-right: 1px solid #555;
  line-height: 18px;
}
.open .tri {
  margin: 0 2px;
}
.grip {
  position: absolute;
  right: 3px;
  bottom: 1px;
  width: 9px;
  height: 9px;
}

/* watermark */
.watermark {
  position: absolute;
  right: 49px;
  bottom: 48px;
  display: flex;
  align-items: center;
  gap: 2px;
  font-family: "Roboto Condensed", Roboto, sans-serif;
  font-size: 39px;
  line-height: 64px;
  color: rgba(255, 255, 255, 0.55);
  text-shadow: 0 0 3px rgba(90, 90, 90, 0.5);
}
.watermark svg {
  width: 60px;
  height: 64px;
  fill: none;
  stroke: rgba(255, 255, 255, 0.7);
  stroke-width: 3;
  filter: drop-shadow(0 0 2px rgba(90, 90, 90, 0.5));
}

/* taskbar */
.taskbar {
  position: absolute;
  right: 0;
  bottom: 0;
  left: 0;
  display: flex;
  height: 40px;
  background: rgba(0, 0, 0, 0.86);
}
.start {
  width: 48px;
}
.taskbar-search {
  display: flex;
  align-items: center;
  gap: 10px;
  width: 288px;
  padding-left: 10px;
  border: 1px solid #c4c4c4;
  background: #f1f1f1;
  font-size: 14px;
}
.taskbar-search input::placeholder {
  color: #333;
}
.scene {
  width: 80px;
  height: 38px;
}
.task {
  width: 48px;
}
.pinned {
  display: flex;
  gap: 1px;
  margin-left: 3px;
}
.active {
  border-bottom: 2px solid #76b9ed;
  background: linear-gradient(#505050 50%, #333 50%);
}
.alerting {
  border-bottom: 2px solid #f07a10;
  background: #a6602a;
}
.tray {
  display: flex;
  align-items: center;
  gap: 8px;
  height: 40px;
  margin-left: auto;
  padding-right: 4px;
  color: #fff;
}
.tray svg {
  fill: none;
  stroke: #fff;
  stroke-width: 1.2;
}
.clock {
  display: flex;
  flex-direction: column;
  gap: 3px;
  width: 54px;
  margin: 0 8px 0 2px;
  text-align: center;
}
.note {
  margin: 0 11px 0 0;
}
.peek {
  width: 1px;
  height: 40px;
  background: #555;
}
```
